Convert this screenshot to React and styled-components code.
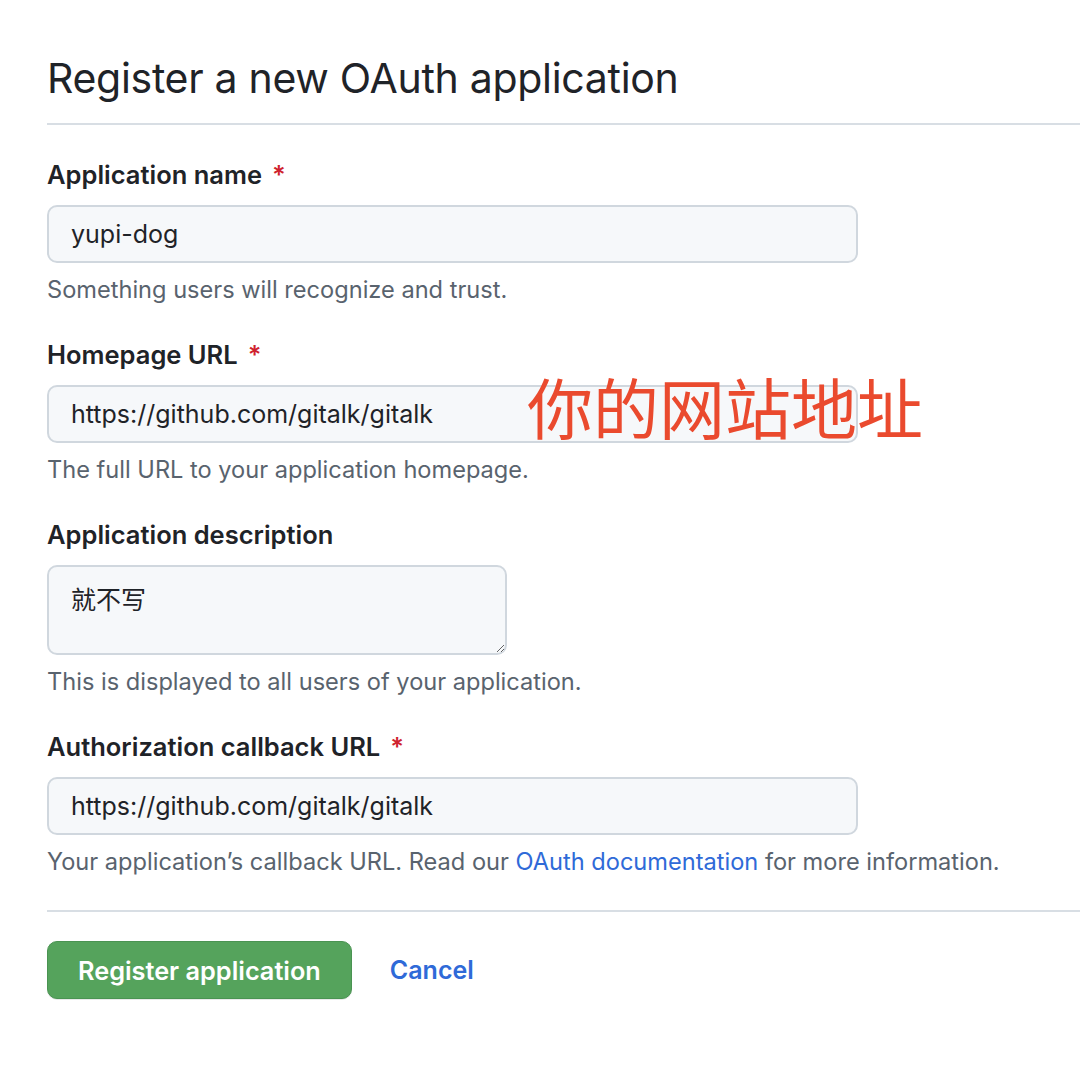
import styled, { createGlobalStyle } from "styled-components";

const GlobalStyle = createGlobalStyle`
    body {
        margin: 0;
        background: #ffffff;
        font-family: Inter, "Noto Sans CJK SC", sans-serif;
        color: #1f2328;
    }
`;

const Page = styled.div`
    padding: 0 0 40px 47px;
`;

const Header = styled.div`
    border-bottom: 2px solid #d8dee4;
    padding: 52px 0 19px;
`;

const Title = styled.h2`
    margin: 0;
    font-size: 41px;
    font-weight: 400;
    line-height: 52px;
    letter-spacing: -0.3px;
    color: #1f2328;
`;

const Form = styled.div`
    padding-top: 35px;
`;

const Group = styled.div`
    margin-bottom: ${(p) => (p.last ? 0 : 35)}px;
`;

const Label = styled.label`
    display: block;
    font-size: 25.5px;
    font-weight: 600;
    line-height: 30px;
    margin-bottom: 15px;
`;

const Star = styled.span`
    color: #cf222e;
    margin-left: 10px;
`;

const FieldWrap = styled.div`
    position: relative;
    width: ${(p) => p.width}px;
`;

const TextInput = styled.input`
    box-sizing: border-box;
    width: 100%;
    height: 58px;
    padding: 0 22px;
    border: 2px solid #d0d7de;
    border-radius: 10px;
    background: #f6f8fa;
    font-family: Inter, "Noto Sans CJK SC", sans-serif;
    font-size: 25px;
    color: #1f2328;
    outline: none;
`;

const TextArea = styled.textarea`
    display: block;
    box-sizing: border-box;
    width: 100%;
    height: 90px;
    padding: 16px 22px;
    border: 2px solid #d0d7de;
    border-radius: 10px;
    background: #f6f8fa;
    font-family: Inter, "Noto Sans CJK SC", sans-serif;
    font-size: 25px;
    line-height: 34px;
    color: #1f2328;
    outline: none;
`;

const Note = styled.p`
    margin: 12px 0 0;
    font-size: 23.6px;
    line-height: 30px;
    color: #59636e;
`;

const Link = styled.a`
    color: #2f6ad8;
    text-decoration: none;
`;

const Annotation = styled.span`
    position: absolute;
    left: 480px;
    top: -13px;
    font-family: "Noto Sans CJK SC", sans-serif;
    font-size: 66px;
    line-height: 1;
    color: #ea4a2e;
    white-space: nowrap;
    pointer-events: none;
`;

const Divider = styled.hr`
    margin: 33px 0 29px;
    border: 0;
    border-top: 2px solid #d8dee4;
`;

const Actions = styled.div`
    display: flex;
    align-items: center;
    gap: 38px;
`;

const PrimaryButton = styled.button`
    height: 58px;
    padding: 0 30px;
    border: 1px solid #4a9352;
    border-radius: 10px;
    background: #55a35c;
    color: #ffffff;
    font-family: Inter, sans-serif;
    font-size: 25.3px;
    font-weight: 600;
    box-shadow: 0 1px 0 rgba(31, 35, 40, 0.1);
`;

const CancelLink = styled.a`
    font-size: 25px;
    font-weight: 600;
    color: #2f6ad8;
    text-decoration: none;
`;

const fields = [
    {
        label: "Application name",
        required: true,
        value: "yupi-dog",
        note: "Something users will recognize and trust.",
    },
    {
        label: "Homepage URL",
        required: true,
        value: "https://github.com/gitalk/gitalk",
        note: "The full URL to your application homepage.",
        annotation: "你的网站地址",
    },
];

export default function App() {
    return (
        <Page>
            <GlobalStyle />
            <Header>
                <Title>Register a new OAuth application</Title>
            </Header>
            <Form>
                {fields.map((f) => (
                    <Group key={f.label}>
                        <Label>
                            {f.label}
                            {f.required && <Star>*</Star>}
                        </Label>
                        <FieldWrap width={811}>
                            <TextInput readOnly defaultValue={f.value} />
                            {f.annotation && <Annotation>{f.annotation}</Annotation>}
                        </FieldWrap>
                        <Note>{f.note}</Note>
                    </Group>
                ))}
                <Group>
                    <Label>Application description</Label>
                    <FieldWrap width={460}>
                        <TextArea readOnly defaultValue="就不写" />
                    </FieldWrap>
                    <Note>This is displayed to all users of your application.</Note>
                </Group>
                <Group last>
                    <Label>
                        Authorization callback URL
                        <Star>*</Star>
                    </Label>
                    <FieldWrap width={811}>
                        <TextInput
                            readOnly
                            defaultValue="https://github.com/gitalk/gitalk"
                        />
                    </FieldWrap>
                    <Note>
                        Your application’s callback URL. Read our{" "}
                        <Link href="#">OAuth documentation</Link> for more
                        information.
                    </Note>
                </Group>
                <Divider />
                <Actions>
                    <PrimaryButton>Register application</PrimaryButton>
                    <CancelLink href="#">Cancel</CancelLink>
                </Actions>
            </Form>
        </Page>
    );
}
